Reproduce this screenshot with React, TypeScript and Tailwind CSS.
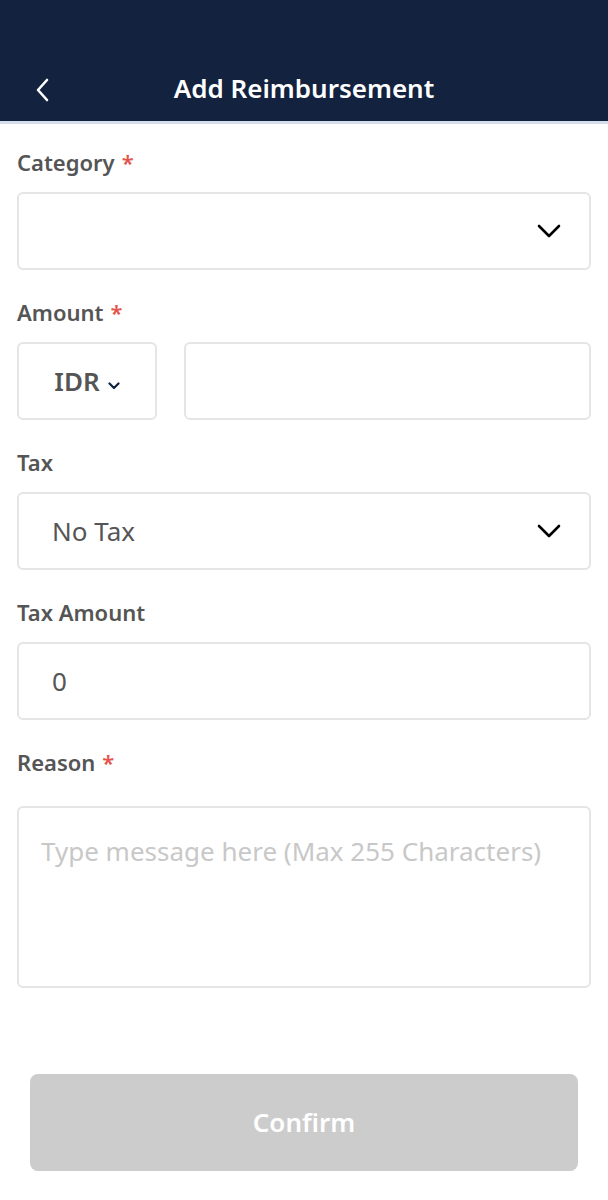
import { ReactNode } from "react";

function Chevron({ className }: { className?: string }) {
  return (
    <svg viewBox="0 0 24 14" className={className} fill="none">
      <path
        d="M2 2l10 10L22 2"
        stroke="currentColor"
        strokeWidth="2.6"
        strokeLinecap="round"
        strokeLinejoin="round"
      />
    </svg>
  );
}

function Label({ children, required }: { children: ReactNode; required?: boolean }) {
  return (
    <div className="h-[30px] text-[22px] leading-[30px] font-semibold text-[#555555]">
      {children}
      {required && <span className="ml-[7px] text-[#e5534b]">*</span>}
    </div>
  );
}

const box =
  "h-[78px] rounded-[6px] border-2 border-[#e5e5e5] bg-white flex items-center";

export default function App() {
  return (
    <div
      className="min-h-[1200px] bg-white flex flex-col"
      style={{ fontFamily: '"Noto Sans", "Open Sans", sans-serif' }}
    >
      <header className="bg-[#12223f] pt-[56px] border-b-[3px] border-[#d5dfec]">
        <div className="relative h-[65px] flex items-center justify-center">
          <button type="button" className="absolute left-[35px] top-[22px] text-white">
            <svg viewBox="0 0 14 24" className="w-[16px] h-[24px]" fill="none">
              <path
                d="M11 2L2 12l9 10"
                stroke="currentColor"
                strokeWidth="2.6"
                strokeLinecap="round"
                strokeLinejoin="round"
              />
            </svg>
          </button>
          <h1 className="text-white text-[26px] font-semibold">Add Reimbursement</h1>
        </div>
      </header>

      <main className="px-[17px] pt-[23px] flex flex-col">
        <Label required>Category</Label>
        <div className={`${box} mt-[15px] justify-end pr-[28px]`}>
          <Chevron className="w-[24px] h-[14px] text-black" />
        </div>

        <div className="mt-[27px]">
          <Label required>Amount</Label>
        </div>
        <div className="mt-[15px] flex gap-[27px]">
          <div className={`${box} w-[140px] justify-center gap-[8px] text-[26px] font-semibold text-[#555555]`}>
            <span>IDR</span>
            <svg viewBox="0 0 12 8" className="w-[12px] h-[8px] mt-[10px] text-[#12223f]" fill="none">
              <path
                d="M1.5 1.5L6 6l4.5-4.5"
                stroke="currentColor"
                strokeWidth="2.2"
                strokeLinecap="round"
                strokeLinejoin="round"
              />
            </svg>
          </div>
          <div className={`${box} flex-1`} />
        </div>

        <div className="mt-[27px]">
          <Label>Tax</Label>
        </div>
        <div className={`${box} mt-[15px] justify-between pl-[33px] pr-[28px]`}>
          <span className="text-[26px] text-[#555555]">No Tax</span>
          <Chevron className="w-[24px] h-[14px] text-black" />
        </div>

        <div className="mt-[27px]">
          <Label>Tax Amount</Label>
        </div>
        <div className={`${box} mt-[15px] pl-[33px]`}>
          <span className="text-[26px] text-[#555555]">0</span>
        </div>

        <div className="mt-[27px]">
          <Label required>Reason</Label>
        </div>
        <div className="mt-[29px] h-[182px] rounded-[6px] border-2 border-[#e5e5e5] px-[22px] pt-[27px]">
          <p className="text-[26px] leading-[32px] text-[#c8c8c8]">
            Type message here (Max 255 Characters)
          </p>
        </div>

        <div className="mt-[86px] px-[13px]">
          <button
            type="button"
            disabled
            className="w-full h-[97px] rounded-[8px] bg-[#cccccc] text-white text-[26px] font-semibold"
          >
            Confirm
          </button>
        </div>
      </main>
    </div>
  );
}
